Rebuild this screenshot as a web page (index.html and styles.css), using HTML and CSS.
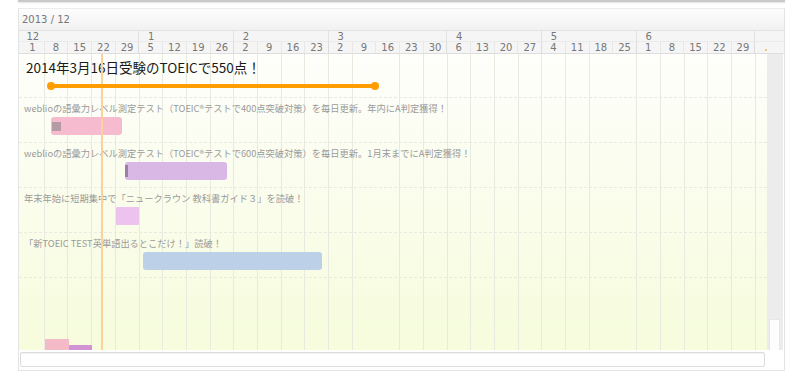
FILE: index.html
```html
<!DOCTYPE html>
<html lang="ja">
<head>
    <meta charset="UTF-8">
    <title>TOEIC 550</title>
    <link rel="stylesheet" href="styles.css">
</head>
<body>
    <div class="topbar"></div>

    <div class="gantt">
        <div class="gantt-title">2013 / 12</div>

        <!-- 月 -->
        <div class="scale months">
            <div class="month span5"><span>12</span></div>
            <div class="month span4"><span>1</span></div>
            <div class="month span4"><span>2</span></div>
            <div class="month span5"><span>3</span></div>
            <div class="month span4"><span>4</span></div>
            <div class="month span4"><span>5</span></div>
            <div class="month span5"><span>6</span></div>
            <div class="month rest"></div>
        </div>

        <!-- 週 -->
        <div class="scale weeks">
            <div class="week">1</div><div class="week">8</div><div class="week">15</div><div class="week">22</div><div class="week edge">29</div>
            <div class="week">5</div><div class="week">12</div><div class="week">19</div><div class="week edge">26</div>
            <div class="week">2</div><div class="week">9</div><div class="week">16</div><div class="week edge">23</div>
            <div class="week">2</div><div class="week">9</div><div class="week">16</div><div class="week">23</div><div class="week edge">30</div>
            <div class="week">6</div><div class="week">13</div><div class="week">20</div><div class="week edge">27</div>
            <div class="week">4</div><div class="week">11</div><div class="week">18</div><div class="week edge">25</div>
            <div class="week">1</div><div class="week">8</div><div class="week">15</div><div class="week">22</div><div class="week edge">29</div>
            <div class="week rest"><i class="dot"></i></div>
        </div>

        <div class="gantt-main">
            <div class="chart">
                <div class="today"></div>

                <div class="row goal">
                    <div class="goal-text">2014年3月16日受験のTOEICで550点！</div>
                    <div class="goal-line" style="margin-left: 31px; width: 326px;"></div>
                </div>

                <div class="row">
                    <div class="label">weblioの語彙力レベル測定テスト（TOEIC®テストで400点突破対策）を毎日更新。年内にA判定獲得！</div>
                    <div class="bar pink" style="margin-left: 32px; width: 71px;"><i class="progress" style="width: 9px;"></i></div>
                </div>

                <div class="row">
                    <div class="label">weblioの語彙力レベル測定テスト（TOEIC®テストで600点突破対策）を毎日更新。1月末までにA判定獲得！</div>
                    <div class="bar lavender" style="margin-left: 106px; width: 102px;"><i class="progress thin" style="width: 3px;"></i></div>
                </div>

                <div class="row">
                    <div class="label">年末年始に短期集中で「ニュークラウン 教科書ガイド３」を読破！</div>
                    <div class="bar orchid" style="margin-left: 97px; width: 23px;"></div>
                </div>

                <div class="row">
                    <div class="label">「新TOEIC TEST英単語出るとこだけ！」読破！</div>
                    <div class="bar blue" style="margin-left: 124px; width: 179px;"></div>
                </div>

                <div class="histogram">
                    <div class="hist pink" style="margin-left: 26px; height: 11px;"></div>
                    <div class="hist purple" style="height: 5px;"></div>
                </div>
            </div>

            <div class="scrollbar">
                <div class="thumb"></div>
            </div>
        </div>

        <div class="gantt-footer">
            <div class="slider"></div>
        </div>
    </div>
</body>
</html>
```

FILE: styles.css
```css
body {
    margin: 0;
    background: #ffffff;
    font-family: "DejaVu Sans", "Noto Sans CJK JP", sans-serif;
}

.topbar {
    margin-left: 18px;
    width: 767px;
    height: 2px;
    background: #c9c9c9;
    box-shadow: 0 1px 2px rgba(0, 0, 0, 0.12);
}

.gantt {
    margin: 6px 0 0 18px;
    width: 767px;
    border: 1px solid #e4e4e4;
    border-top-color: #ececec;
    box-sizing: border-box;
}

.gantt-title {
    height: 21px;
    line-height: 21px;
    padding-left: 3px;
    font-size: 10px;
    color: #777;
    background: linear-gradient(#fdfdfd, #f1f1f1);
    border-bottom: 1px solid #e2e2e2;
}

/* 目盛り */
.scale {
    display: grid;
    grid-template-columns: repeat(31, 23.7px) 1fr;
    padding-left: 2px;
    font-size: 10px;
    line-height: 11px;
    color: #777;
    background: #f5f5f5;
}

.months {
    height: 10px;
    line-height: 11px;
    border-bottom: 1px solid #ebebeb;
}

.weeks {
    height: 11px;
    border-bottom: 1px solid #dedede;
}

.month {
    border-right: 1px solid #e2e2e2;
}

.month span {
    display: block;
    width: 23.7px;
    text-align: center;
}

.span5 { grid-column: span 5; }
.span4 { grid-column: span 4; }

.month.rest,
.week.rest {
    border-right: none;
}

.week {
    text-align: center;
    border-right: 1px solid #e8e8e8;
}

.week.edge {
    border-right-color: #dcdcdc;
}

.dot {
    display: inline-block;
    width: 2px;
    height: 2px;
    margin-top: 6px;
    margin-right: 8px;
    background: #f1c77b;
}

/* 本体 */
.gantt-main {
    display: flex;
}

.chart {
    position: relative;
    display: flex;
    flex-direction: column;
    width: 748px;
    height: 296px;
    background:
        repeating-linear-gradient(to right, transparent 0, transparent 22.7px, #e9eadf 22.7px, #e9eadf 23.7px) 2px 0 / 736px 100% no-repeat,
        linear-gradient(#fefefb, #f6fcdc);
}

.today {
    position: absolute;
    left: 82px;
    top: 0;
    bottom: 0;
    width: 2px;
    background: #fbd29c;
}

.row {
    height: 45px;
    padding-top: 3px;
    box-sizing: border-box;
    border-bottom: 1px dashed #e9e9e0;
}

.row.goal {
    height: 44px;
    padding-top: 3px;
}

.goal-text {
    padding-left: 7px;
    font-family: "Noto Sans CJK JP", sans-serif;
    font-size: 13.5px;
    line-height: 20px;
    color: #1a1a1a;
}

.goal-line {
    position: relative;
    height: 4px;
    margin-top: 7px;
    background: #ff9d00;
}

.goal-line::before,
.goal-line::after {
    content: "";
    position: absolute;
    top: -2px;
    width: 8px;
    height: 8px;
    border-radius: 50%;
    background: #ff9d00;
}

.goal-line::before { left: -3px; }
.goal-line::after { right: -3px; }

.label {
    padding-left: 5px;
    font-family: "Noto Sans CJK JP", sans-serif;
    font-size: 9.25px;
    line-height: 14px;
    color: #9a9a9a;
    white-space: nowrap;
}

.bar {
    display: flex;
    align-items: center;
    height: 18px;
    margin-top: 2px;
    border-radius: 3px;
}

.progress {
    height: 9px;
    margin-left: 1px;
    background: #b59aa4;
}

.progress.thin {
    height: 12px;
    margin-left: 0;
    background: #9e7fa9;
}

.pink { background: #f6bbcf; }
.lavender { background: #d9b8e6; }
.orchid { background: #eec2ee; border-radius: 1px; }
.blue { background: #bcd1e7; }

.histogram {
    display: flex;
    align-items: flex-end;
    margin-top: auto;
}

.hist {
    width: 23.7px;
}

.hist.pink { background: #f4bac7; }
.hist.purple { background: #d193d3; }

.scrollbar {
    display: flex;
    flex-direction: column;
    justify-content: flex-end;
    width: 16px;
    height: 296px;
    background: #ececec;
}

.thumb {
    height: 30px;
    margin: 0 3px 0 2px;
    background: #fdfdfd;
    border: 1px solid #e6e6e6;
    border-bottom: none;
}

.gantt-footer {
    height: 20px;
    padding: 2px 0 0 1px;
    box-sizing: border-box;
}

.slider {
    width: 745px;
    height: 15px;
    background: #ffffff;
    border: 1px solid #dcdcdc;
    border-radius: 2px;
    box-shadow: inset 0 1px 1px rgba(0, 0, 0, 0.05);
    box-sizing: border-box;
}
```
